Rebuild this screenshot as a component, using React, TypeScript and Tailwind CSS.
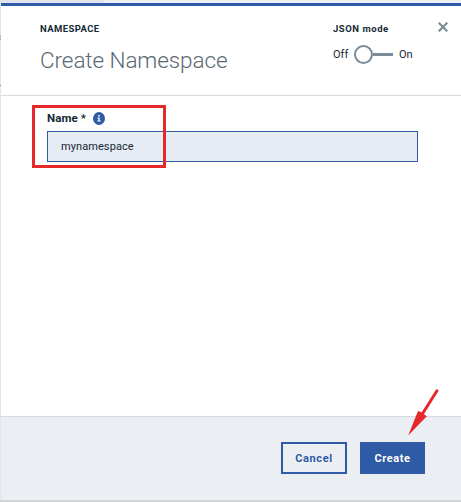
import React from 'react';

function Header() {
  return (
    <header className="flex h-[93px] shrink-0 border-t-[3px] border-b border-t-[#2f5aa5] border-b-[#d8dcdf] pl-[39px]">
      <div className="w-[293px] pt-[16px]">
        <div className="h-[13px] w-max text-[9.5px] leading-[14px] font-bold tracking-[0.4px] text-[#152935]">NAMESPACE</div>
        <h1 className="mt-[10px] w-max text-[22.5px] leading-[31px] font-light tracking-[-0.08px] text-[#5a6872]">Create Namespace</h1>
      </div>
      <div className="w-[105px] pt-[16px]">
        <div className="h-[13px] w-max text-[9.5px] leading-[14px] font-bold tracking-[0.55px] text-[#152935]">JSON mode</div>
        <div className="mt-[9px] flex h-[20px] items-center text-[11px] text-[#152935]">
          <span className="w-[21px] pt-[2px]">Off</span>
          <span className="flex items-center">
            <span className="size-[19px] rounded-full border-2 border-[#7b8c98] bg-white" />
            <span className="h-[3px] w-[20px] bg-[#7b8c98]" />
          </span>
          <span className="ml-[6px] pt-[2px]">On</span>
        </div>
      </div>
      <button aria-label="Close" className="mt-[16px] size-[10px]">
        <svg width="10" height="10" viewBox="0 0 10 10" className="block">
          <path d="M.7 .7L9.3 9.3M9.3 .7L.7 9.3" stroke="#7b8c98" strokeWidth="2.2" />
        </svg>
      </button>
    </header>
  );
}

function NameField() {
  return (
    <div className="pt-[15px] pl-[46px]">
      <div className="flex h-[14px] items-center">
        <label htmlFor="name" className="w-[46px] text-[11.5px] leading-[14px] font-bold tracking-[0.1px] whitespace-nowrap text-[#152935]">Name *</label>
        <svg width="12" height="13" viewBox="0 0 12 13">
          <ellipse cx="6" cy="6.5" rx="6" ry="6.5" fill="#2f5aa5" />
          <path d="M5.2 3h1.6v1.5H5.2zM4.4 5.4h2.3v3.2h1v1H4.3v-1h1.1V6.4h-1z" fill="#fff" />
        </svg>
      </div>
      <input
        id="name"
        defaultValue="mynamespace"
        className="mt-[6px] block h-[31px] w-[371px] border border-[#325ca0] bg-[#e6ebf4] px-[13px] text-[11px] tracking-[0.08px] text-[#152935] outline-none"
      />
    </div>
  );
}

export default function App() {
  return (
    <div className="relative flex h-[502px] w-[461px] flex-col overflow-hidden bg-[#e2e6e9] font-['Roboto',sans-serif]">
      <div className="flex h-[3px] shrink-0">
        <span className="w-[104px] bg-[#dfe5eb]" />
        <span className="grow bg-[#ebeef2]" />
      </div>
      <main className="ml-px flex h-[497px] shrink-0 flex-col bg-white">
        <Header />
        <section className="h-[320px]">
          <NameField />
        </section>
        <footer className="flex h-[84px] gap-[13px] border-t border-[#d3d9dd] bg-[#ebeff3] pt-[25px] pl-[280px] text-[11px] font-bold">
          <button className="h-[32px] w-[66px] border-2 border-[#2f5aa5] pt-[2px] tracking-[0.6px] text-[#2f5aa5]">Cancel</button>
          <button className="h-[32px] w-[65px] bg-[#2f5aa5] pt-[2px] tracking-[0.55px] text-white">Create</button>
        </footer>
      </main>
      <div className="h-[2px] bg-[#d2d5d8]" />
      <span className="absolute top-[35px] left-0 h-px w-px bg-[#999faa]" />
      <span className="absolute top-[37px] left-0 h-px w-px bg-[#999faa]" />
      <span className="absolute top-[39px] left-0 h-px w-px bg-[#999faa]" />
      <span className="absolute top-[85px] left-0 h-px w-px bg-[#668bc6]" />
      <div className="absolute top-[105px] left-[32px] h-[63px] w-[134px] border-[3px] border-[#e4282b]" />
      <svg width="34" height="50" viewBox="0 0 34 50" className="absolute top-[387px] left-[406px]">
        <path d="M31 3.8L16 27.5" stroke="#e4282b" strokeWidth="3" strokeLinecap="round" />
        <path d="M2.2 48.5L12 24L15 25L20.8 29.2Z" fill="#e4282b" />
      </svg>
    </div>
  );
}
